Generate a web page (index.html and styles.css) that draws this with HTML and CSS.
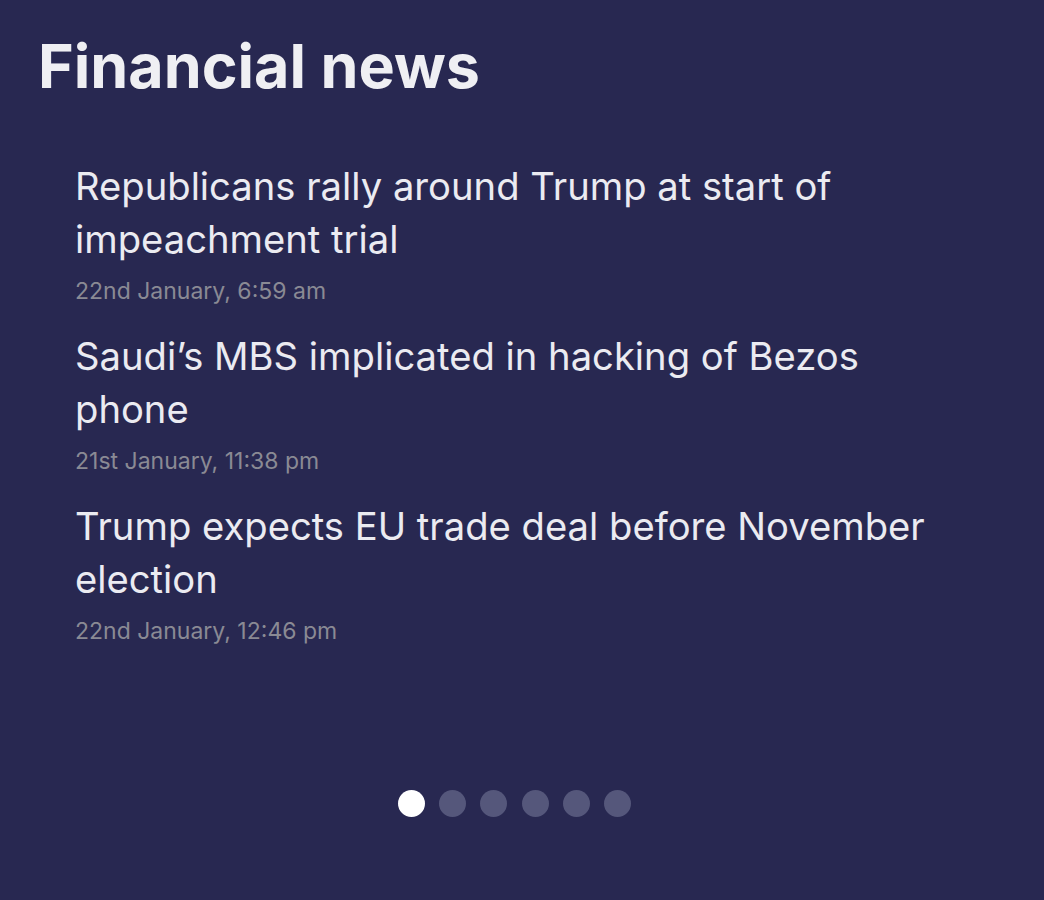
FILE: index.html
```html
<!DOCTYPE html>
<html>
<head>
<meta charset="utf-8">
<link rel="stylesheet" href="styles.css">
</head>
<body>
<main class="panel">
  <h1 class="title">Financial news</h1>
  <ul class="news">
    <li class="item">
      <p class="headline">Republicans rally around Trump at start of impeachment trial</p>
      <p class="date">22nd January, 6:59 am</p>
    </li>
    <li class="item">
      <p class="headline">Saudi’s MBS implicated in hacking of Bezos phone</p>
      <p class="date">21st January, 11:38 pm</p>
    </li>
    <li class="item">
      <p class="headline">Trump expects EU trade deal before November election</p>
      <p class="date">22nd January, 12:46 pm</p>
    </li>
  </ul>
  <div class="dots">
    <span class="dot active"></span>
    <span class="dot"></span>
    <span class="dot"></span>
    <span class="dot"></span>
    <span class="dot"></span>
    <span class="dot"></span>
  </div>
</main>
</body>
</html>
```

FILE: styles.css
```css
html, body {
  margin: 0;
  padding: 0;
  background: #282851;
}
body {
  font-family: Inter, "Open Sans", sans-serif;
  color: #ebebf1;
  width: 1044px;
  height: 900px;
  overflow: hidden;
}
.panel {
  padding: 30px 0 0 38px;
}
.title {
  margin: 0;
  font-size: 61px;
  font-weight: 700;
  line-height: 72px;
  color: #efeff3;
}
.news {
  list-style: none;
  margin: 0;
  padding: 58px 0 0 37px;
  width: 862px;
}
.item {
  margin: 0 0 25.5px 0;
}
.headline {
  margin: 0;
  font-size: 38.2px;
  line-height: 53px;
  font-weight: 400;
}
.date {
  margin: 10.5px 0 0 0;
  font-size: 23px;
  line-height: 28px;
  color: #8a8a94;
}
.dots {
  display: flex;
  justify-content: center;
  gap: 14.4px;
  margin: 145px 0 0 -38px;
  padding-right: 15px;
}
.dot {
  width: 27px;
  height: 27px;
  border-radius: 50%;
  background: #55577b;
}
.dot.active {
  background: #ffffff;
}
```
